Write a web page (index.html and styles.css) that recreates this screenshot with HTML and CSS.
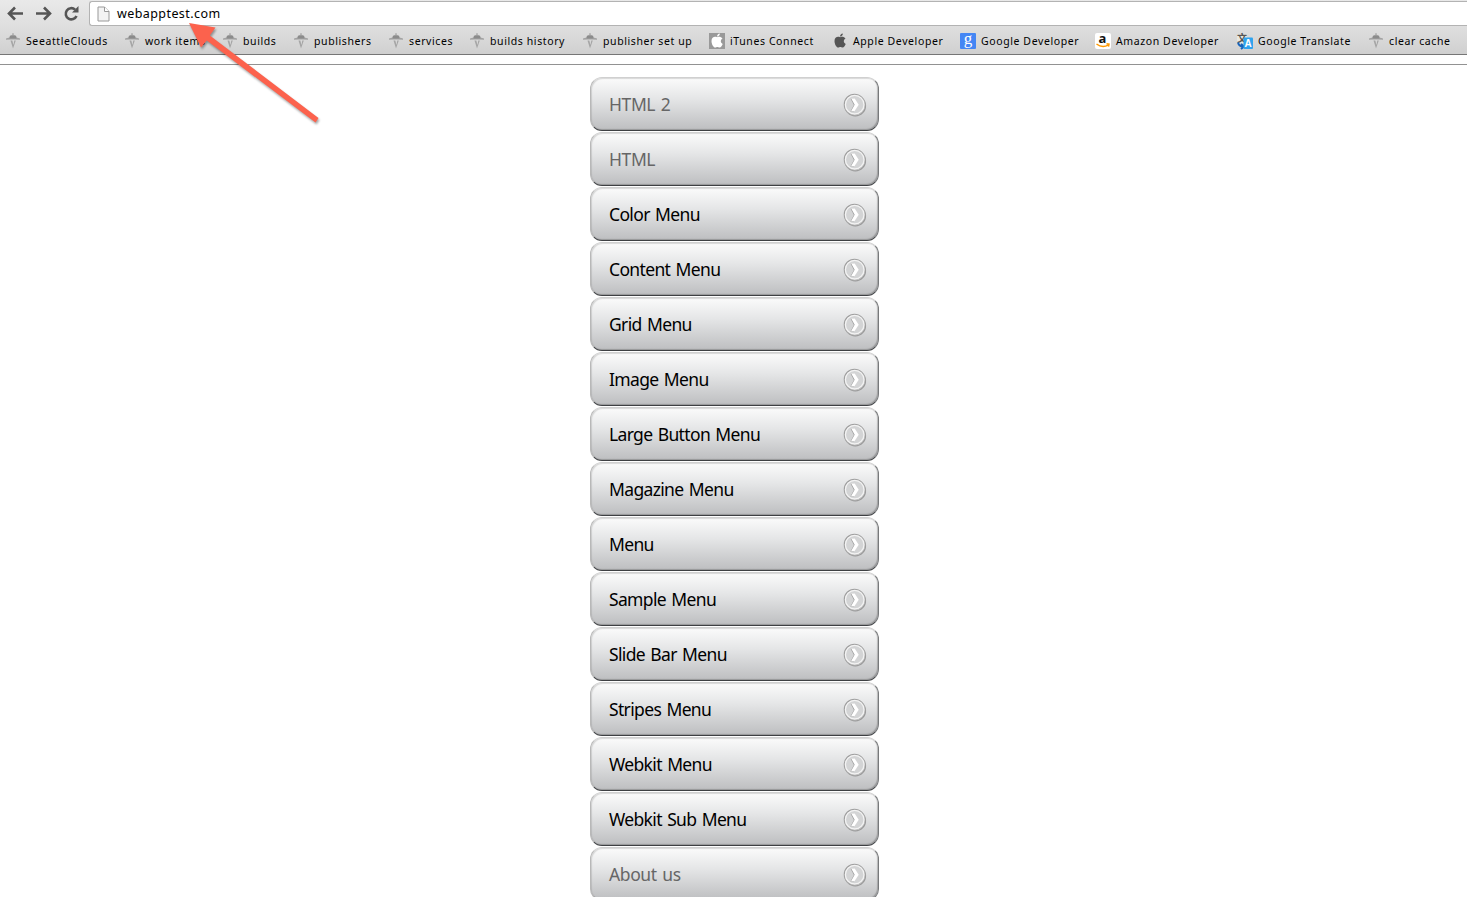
FILE: index.html
```
<!DOCTYPE html>
<html lang="en">
<head>
  <meta charset="UTF-8">
  <title>webapptest.com</title>
  <link rel="stylesheet" href="styles.css">
</head>
<body>
  <!-- shared icons -->
  <svg class="sprites" width="0" height="0">
    <defs>
      <linearGradient id="ring" x1="0" y1="0" x2="1" y2="1">
        <stop offset="0" stop-color="#999"/>
        <stop offset="1" stop-color="#b9b9b9"/>
      </linearGradient>
    </defs>
    <symbol id="tower" viewBox="0 0 16 16">
      <path d="M7.500 0h1v1.500L11 3l.5 1.500 3.500 1v1.300L10 6.500H6l-5 .3V5.500l3.500-1L5 3l2.500-1.500z" fill="#a2a2a2"/>
      <path d="M5 2.800h6l.5 2.700h-7z" fill="#8b8b8b"/>
      <path d="M5.500 7.500L8 15.500l2.800-8H9.300l-.8 4.500-1.200-4.500z" fill="#a5a5a5"/>
    </symbol>
    <symbol id="apple" viewBox="0 0 16 16">
      <path d="M8.100 4.200c-2-.9-5.600-.7-5.600 3.700 0 3 1.900 6.600 3.800 6.600.8 0 1.200-.5 2.100-.5s1.300.5 2.100.5c1.500 0 2.800-2.300 3.200-3.600-2.500-1-2.400-4.200-.2-5.300-1.300-1.900-3.600-2.100-5.400-1.400z"/>
      <path d="M8 3.600C7.900 1.900 9.300.7 10.800.5 11 2.100 9.700 3.500 8 3.600z"/>
    </symbol>
    <symbol id="go" viewBox="0 0 24 24">
      <circle cx="12.300" cy="12.700" r="10.200" fill="none" stroke="#999" stroke-width="1.200"/>
      <circle cx="11.500" cy="11.500" r="10.200" fill="#d3d4d5" stroke="url(#ring)" stroke-width="1.200"/>
      <circle cx="11.700" cy="11.700" r="9.300" fill="none" stroke="#f3f3f3" stroke-width="1.300"/>
      <path d="M7.600 5.800h3.600l3.600 6-3.800 6.600H7.400l3.500-6.400z" fill="#a0a0a0"/>
      <path d="M8.200 5.400h3.500l4 6.400-4.200 6.500H8l3.700-6.500z" fill="#fff"/>
    </symbol>
  </svg>

  <div class="toolbar">
    <div class="nav">
      <svg width="90" height="28" viewBox="0 0 90 28" fill="none" stroke="#555" stroke-width="2.600">
        <path d="M23 13.500H9.500M15 7.500l-6 6 6 6"/>
        <path d="M36 13.500h13.500M44 7.500l6 6-6 6"/>
        <path d="M76.500 16a5.600 5.600 0 1 1-1.400-6.400"/>
        <path d="M78.500 6v6.500H72z" fill="#555" stroke="none"/>
      </svg>
    </div>
    <div class="address">
      <svg width="13" height="16" viewBox="0 0 13 16">
        <path d="M1 1h6.500L12 5.500V15H1z" fill="#f3f3f3" stroke="#999"/>
        <path d="M7.500 1v4.500H12" fill="#fff" stroke="#999"/>
      </svg>
      <span>webapptest.com</span>
    </div>
  </div>

  <div class="bookmarks">
    <div class="bookmark"><svg><use href="#tower"/></svg><span>SeeattleClouds</span></div>
    <div class="bookmark"><svg><use href="#tower"/></svg><span>work items</span></div>
    <div class="bookmark"><svg><use href="#tower"/></svg><span>builds</span></div>
    <div class="bookmark"><svg><use href="#tower"/></svg><span>publishers</span></div>
    <div class="bookmark"><svg><use href="#tower"/></svg><span>services</span></div>
    <div class="bookmark"><svg><use href="#tower"/></svg><span>builds history</span></div>
    <div class="bookmark"><svg><use href="#tower"/></svg><span>publisher set up</span></div>
    <div class="bookmark"><svg class="itunes"><use href="#apple"/></svg><span>iTunes Connect</span></div>
    <div class="bookmark"><svg class="apple"><use href="#apple"/></svg><span>Apple Developer</span></div>
    <div class="bookmark">
      <svg viewBox="0 0 16 16"><rect width="16" height="16" rx="1" fill="#4486f4"/><text x="3.800" y="11" class="g-letter">g</text></svg>
      <span>Google Developer</span>
    </div>
    <div class="bookmark">
      <svg class="amazon" viewBox="0 0 16 16"><rect width="16" height="16" rx="2" fill="#fff"/><text x="3.500" y="9.500" class="a-letter">a</text><path d="M1.500 11q6 4.500 12 .8M11.500 10.800l2.500.3-.5 2.500" fill="none" stroke="#f90" stroke-width="1.500"/></svg>
      <span>Amazon Developer</span>
    </div>
    <div class="bookmark">
      <svg viewBox="0 0 16 16">
        <path d="M0 1h10v9H0z" fill="#e9e8df"/>
        <text x="0" y="9" class="cjk-letter">文</text>
        <path d="M1 9.500q1 4 5 4M4 11l3 2.500L4 16" fill="none" stroke="#1764bb" stroke-width="2"/>
        <rect x="6.500" y="4.500" width="9.500" height="11.500" rx="1" fill="#30a3ee"/>
        <text x="7.600" y="14" class="t-letter">A</text>
      </svg>
      <span>Google Translate</span>
    </div>
    <div class="bookmark"><svg><use href="#tower"/></svg><span>clear cache</span></div>
  </div>
  <div class="page-line"></div>

  <div class="menu">
    <a class="item visited"><span>HTML 2</span><svg><use href="#go"/></svg></a>
    <a class="item visited"><span>HTML</span><svg><use href="#go"/></svg></a>
    <a class="item"><span>Color Menu</span><svg><use href="#go"/></svg></a>
    <a class="item"><span>Content Menu</span><svg><use href="#go"/></svg></a>
    <a class="item"><span>Grid Menu</span><svg><use href="#go"/></svg></a>
    <a class="item"><span>Image Menu</span><svg><use href="#go"/></svg></a>
    <a class="item"><span>Large Button Menu</span><svg><use href="#go"/></svg></a>
    <a class="item"><span>Magazine Menu</span><svg><use href="#go"/></svg></a>
    <a class="item"><span>Menu</span><svg><use href="#go"/></svg></a>
    <a class="item"><span>Sample Menu</span><svg><use href="#go"/></svg></a>
    <a class="item"><span>Slide Bar Menu</span><svg><use href="#go"/></svg></a>
    <a class="item"><span>Stripes Menu</span><svg><use href="#go"/></svg></a>
    <a class="item"><span>Webkit Menu</span><svg><use href="#go"/></svg></a>
    <a class="item"><span>Webkit Sub Menu</span><svg><use href="#go"/></svg></a>
    <a class="item visited"><span>About us</span><svg><use href="#go"/></svg></a>
  </div>

  <!-- arrow pointing at the address -->
  <svg class="pointer" width="150" height="130" viewBox="0 0 150 130">
    <path d="M9 23l26.500 4.500-5.700 8L138.500 118l-3 4.500L26.800 40.500 21 47.500z" fill="#fc624d"/>
  </svg>
</body>
</html>
```
FILE: styles.css
```
* {
  box-sizing: border-box;
}

body {
  margin: 0;
  height: 897px;
  overflow: hidden;
  background: #fff;
  font-family: "Noto Sans", sans-serif;
}

.sprites {
  position: absolute;
}

.toolbar {
  display: flex;
  height: 28px;
  background: linear-gradient(#e9e9e9, #dedede);
}

.nav {
  width: 89px;
  overflow: hidden;
}

.address {
  flex: 1;
  display: flex;
  align-items: center;
  height: 25px;
  margin-top: 1px;
  padding-left: 7px;
  background: #fff;
  border: 1px solid #b3b3b3;
  border-right: none;
  border-radius: 3px 0 0 3px;
  font-size: 12.5px;
  letter-spacing: 0.42px;
}

.address span {
  margin-left: 7px;
}

.bookmarks {
  display: grid;
  grid-template-columns: 119px 98px 71px 95px 81px 113px 127px 123px 128px 135px 142px 131px 90px;
  align-items: center;
  height: 27px;
  padding-left: 5px;
  background: linear-gradient(#dedede, #d0d0d0);
  border-bottom: 1px solid #767676;
}

.bookmark {
  display: flex;
  align-items: center;
  font-size: 10.5px;
  letter-spacing: 0.6px;
  white-space: nowrap;
}

.bookmark svg {
  width: 16px;
  height: 16px;
  margin-right: 5px;
  flex: none;
  overflow: visible;
}

.bookmark .itunes {
  background: #999;
  fill: #fff;
}

.bookmark .apple {
  fill: #555;
}

.g-letter {
  font: 17px "Liberation Serif", serif;
  letter-spacing: 0;
  fill: #fff;
}

.a-letter {
  font: bold 13px "Open Sans", sans-serif;
  letter-spacing: 0;
  fill: #111;
}

.cjk-letter {
  font: bold 10px "Noto Sans CJK SC", sans-serif;
  letter-spacing: 0;
  fill: #555;
}

.t-letter {
  font: bold 10px "Liberation Sans", sans-serif;
  letter-spacing: 0;
  fill: #fff;
}

.page-line {
  height: 10px;
  border-bottom: 1px solid #929292;
}

.menu {
  width: 289px;
  margin: 12px 0 0 590px;
}

.item {
  display: flex;
  align-items: center;
  justify-content: space-between;
  height: 54px;
  margin-bottom: 1px;
  padding: 1px 11px 0 18px;
  border: 1px solid;
  border-color: #d0d0d0 #77797b #3e4043 #b8b8b8;
  border-radius: 12px;
  background: linear-gradient(#fcfcfc, #e5e6e7 40%, #bcbdbf) border-box;
  box-shadow: inset -1px -1px 1px rgba(60, 60, 60, 0.3), inset 1px 1px 1px rgba(140, 140, 140, 0.3);
  color: #000;
  font-size: 17.5px;
  line-height: 20px;
  letter-spacing: -0.65px;
  word-spacing: 1.4px;
}

.item.visited {
  color: #666;
  letter-spacing: -0.4px;
}

.item span {
  padding-bottom: 2px;
}

.item svg {
  width: 24px;
  height: 24px;
}

.pointer {
  position: absolute;
  left: 180px;
  top: 0;
  filter: drop-shadow(1px 2px 1px rgba(0, 0, 0, 0.35));
}
```
